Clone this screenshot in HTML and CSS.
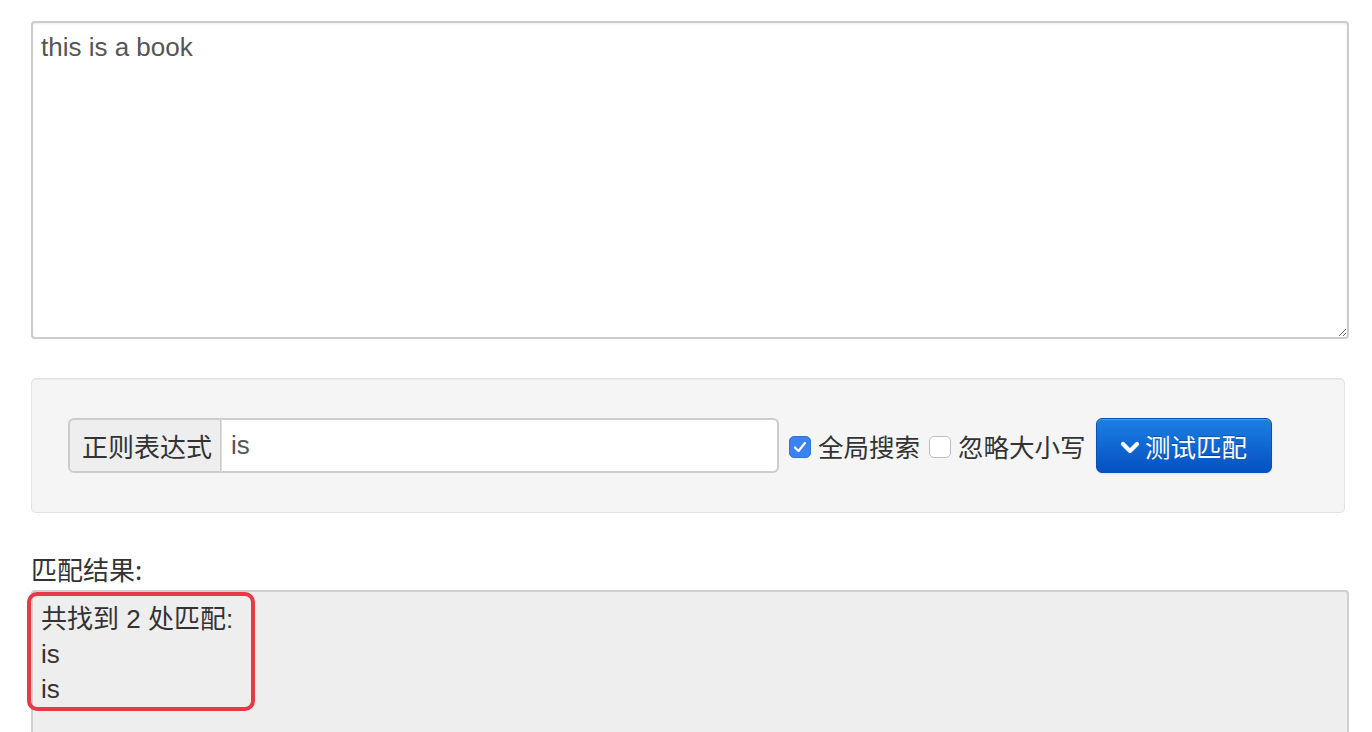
FILE: index.html
```html
<!DOCTYPE html>
<html>
<head>
<meta charset="utf-8">
<link rel="stylesheet" href="styles.css">
</head>
<body>
<div class="page">
  <textarea class="source">this is a book</textarea>

  <div class="well">
    <div class="input-group">
      <span class="addon">正则表达式</span>
      <span class="field">is</span>
    </div>
    <label class="check">
      <span class="box checked">
        <svg viewBox="0 0 22 22" width="22" height="22"><path d="M6 11.5l3.5 3.5 6.5-8" fill="none" stroke="#fff" stroke-width="2.2" stroke-linecap="round" stroke-linejoin="round"/></svg>
      </span>
      <span class="check-text">全局搜索</span>
    </label>
    <label class="check">
      <span class="box"></span>
      <span class="check-text">忽略大小写</span>
    </label>
    <button class="btn-primary">
      <svg class="chev" viewBox="0 0 20 16" width="20" height="16"><path d="M3 5l7 7 7-7" fill="none" stroke="#fff" stroke-width="4.2" stroke-linecap="round" stroke-linejoin="round"/></svg>
      <span>测试匹配</span>
    </button>
  </div>

  <div class="result-label">匹配结果:</div>
  <div class="result">
    <div class="line">共找到 2 处匹配:</div>
    <div class="line">is</div>
    <div class="line">is</div>
    <div class="highlight"></div>
  </div>
</div>
</body>
</html>
```

FILE: styles.css
```css
html, body {
  margin: 0;
  padding: 0;
  background: #fff;
  overflow: hidden;
}

.page {
  padding: 21px 0 0 31px;
  width: 1318px;
  font-family: "Liberation Sans", "Noto Sans CJK SC", sans-serif;
  font-size: 26px;
  color: #555;
}

.source {
  display: block;
  box-sizing: border-box;
  width: 1318px;
  height: 318px;
  margin: 0;
  padding: 7px 8px;
  border: 2px solid #ccc;
  border-radius: 4px;
  box-shadow: inset 0 1px 2px rgba(0,0,0,0.08);
  font-family: "Liberation Sans", "Noto Sans CJK SC", sans-serif;
  font-size: 26px;
  line-height: 34px;
  color: #555;
  resize: vertical;
  outline: none;
}

.well {
  box-sizing: border-box;
  width: 1314px;
  height: 135px;
  margin-top: 39px;
  padding: 0 0 0 36px;
  background: #f5f5f5;
  border: 1px solid #e3e3e3;
  border-radius: 5px;
  box-shadow: inset 0 1px 1px rgba(0,0,0,0.04);
  display: flex;
  align-items: center;
}

.input-group {
  display: flex;
  height: 55px;
}

.addon {
  box-sizing: border-box;
  width: 153px;
  height: 55px;
  padding-left: 12px;
  display: flex;
  align-items: center;
  background: #eee;
  border: 2px solid #ccc;
  border-right-width: 1px;
  border-radius: 6px 0 0 6px;
  color: #333;
  font-family: "Noto Sans CJK SC", sans-serif;
}

.field {
  box-sizing: border-box;
  width: 558px;
  height: 55px;
  padding-left: 9px;
  display: flex;
  align-items: center;
  background: #fff;
  border: 2px solid #ccc;
  border-left: 1px solid #ddd;
  border-radius: 0 6px 6px 0;
  color: #555;
}

.check {
  display: flex;
  align-items: center;
  margin-left: 10px;
  color: #333;
}

.check + .check {
  margin-left: 9px;
}

.box {
  box-sizing: border-box;
  width: 22px;
  height: 22px;
  border-radius: 5px;
  background: #fff;
  border: 1px solid #bdbdbd;
  display: block;
  margin-top: 3px;
}

.box.checked {
  background: #3a82f0;
  border-color: #2f73de;
}

.box svg {
  display: block;
  margin: -1px;
}

.check-text {
  margin-left: 7px;
  font-family: "Noto Sans CJK SC", sans-serif;
  font-size: 25.5px;
  line-height: 35px;
}

.btn-primary {
  margin-left: 10px;
  box-sizing: border-box;
  width: 176px;
  height: 55px;
  border: 1px solid #0a4fb3;
  border-radius: 6px;
  background: linear-gradient(to bottom, #1b80e3, #0650c2);
  box-shadow: inset 0 1px 0 rgba(255,255,255,0.2), 0 1px 2px rgba(0,0,0,0.08);
  color: #fff;
  font-family: "Noto Sans CJK SC", sans-serif;
  font-size: 25.5px;
  display: flex;
  align-items: center;
  justify-content: center;
  gap: 5px;
  padding: 0;
  text-shadow: 0 -1px 0 rgba(0,0,0,0.25);
}

.chev {
  display: block;
  margin-top: 2px;
}

.result-label {
  margin-top: 38px;
  line-height: 35px;
  color: #333;
  font-family: "Noto Sans CJK SC", sans-serif;
}

.result {
  position: relative;
  box-sizing: border-box;
  width: 1318px;
  height: 200px;
  margin-top: 4px;
  padding: 10px 8px;
  background: #eee;
  border: 2px solid #d0d0d0;
  border-radius: 4px;
  color: #333;
}

.line {
  line-height: 35px;
}

.highlight {
  position: absolute;
  left: -6px;
  top: 0;
  width: 228px;
  height: 119px;
  box-sizing: border-box;
  border: 4px solid #e8394b;
  border-radius: 10px;
}
```
